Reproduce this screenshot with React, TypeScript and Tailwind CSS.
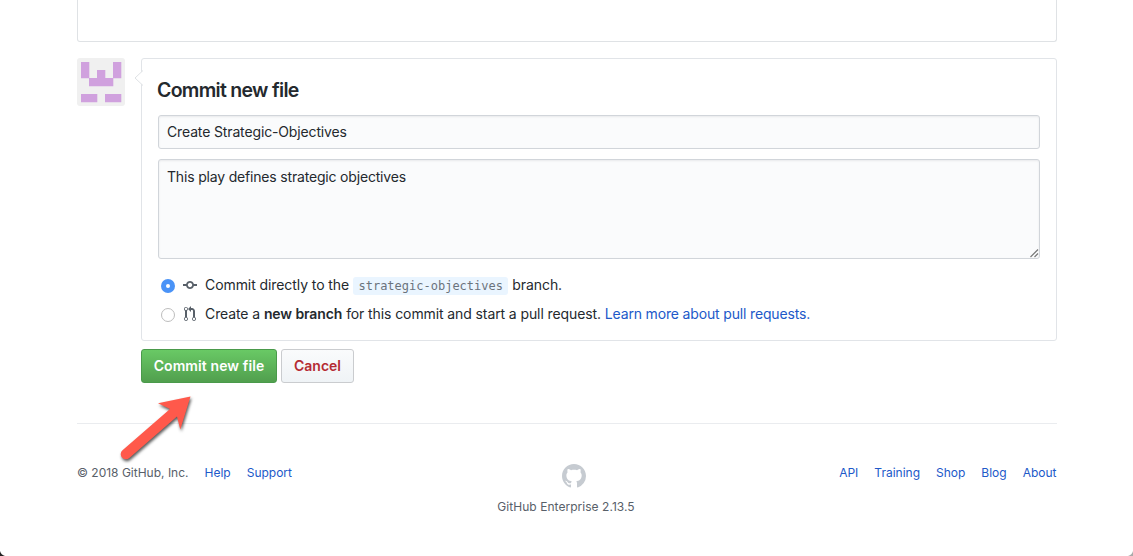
import React from "react";

const link = "text-[#2159c9]";

function Avatar() {
  return (
    <svg className="h-12 w-12 shrink-0 rounded-[3px]" viewBox="0 0 48 48">
      <rect width="48" height="48" fill="#f0f0f0" />
      <path
        fill="#d0a1de"
        d="M4 4h8.300v16.200H4zM36 4h8.300v16.200H36zM20 12h8.300v8h8v8.300H12V20h8zM4 36h16.300v8.300H4zM28 36h16.300v8.300H28z"
      />
    </svg>
  );
}

function CommitIcon() {
  return (
    <svg width="14" height="16" viewBox="0 0 14 16" fill="#586069">
      <path d="M10.86 7c-.45-1.72-2-3-3.86-3-1.86 0-3.41 1.28-3.86 3H0v2h3.14c.45 1.72 2 3 3.86 3 1.86 0 3.41-1.28 3.86-3H14V7h-3.14zM7 10.2c-1.22 0-2.2-.98-2.2-2.2 0-1.22.98-2.2 2.2-2.2 1.22 0 2.2.98 2.2 2.2 0 1.22-.98 2.2-2.2 2.2z" />
    </svg>
  );
}

function PullRequestIcon() {
  return (
    <svg width="12" height="16" viewBox="0 0 12 16" fill="#586069">
      <path d="M11 11.28V5c-.03-.78-.34-1.47-.94-2.06C9.46 2.35 8.78 2.03 8 2H7V0L4 3l3 3V4h1c.27.02.48.11.69.31.21.2.3.42.31.69v6.28A1.993 1.993 0 0 0 10 15a1.993 1.993 0 0 0 1-3.72zm-1 2.92c-.66 0-1.2-.55-1.2-1.2 0-.65.55-1.2 1.2-1.2.65 0 1.2.55 1.2 1.2 0 .65-.55 1.2-1.2 1.2zM4 3c0-1.11-.89-2-2-2a1.993 1.993 0 0 0-1 3.72v6.56A1.993 1.993 0 0 0 2 15a1.993 1.993 0 0 0 1-3.72V4.72c.59-.34 1-.98 1-1.72zm-.8 10c0 .66-.55 1.2-1.2 1.2-.65 0-1.2-.55-1.2-1.2 0-.65.55-1.2 1.2-1.2.65 0 1.2.55 1.2 1.2zM2 4.2C1.34 4.2.8 3.65.8 3c0-.65.55-1.2 1.2-1.2.65 0 1.2.55 1.2 1.2 0 .65-.55 1.2-1.2 1.2z" />
    </svg>
  );
}

function GitHubMark() {
  return (
    <svg width="24" height="24" viewBox="0 0 16 16" fill="#c6cbd1">
      <path d="M8 0C3.58 0 0 3.58 0 8c0 3.54 2.29 6.53 5.47 7.59.4.07.55-.17.55-.38 0-.19-.01-.82-.01-1.49-2.01.37-2.53-.49-2.69-.94-.09-.23-.48-.94-.82-1.13-.28-.15-.68-.52-.01-.53.63-.01 1.08.58 1.23.82.72 1.21 1.87.87 2.33.66.07-.52.28-.87.51-1.07-1.78-.2-3.64-.89-3.64-3.95 0-.87.31-1.59.82-2.15-.08-.2-.36-1.02.08-2.12 0 0 .67-.21 2.2.82.64-.18 1.32-.27 2-.27.68 0 1.36.09 2 .27 1.53-1.04 2.2-.82 2.2-.82.44 1.1.16 1.92.08 2.12.51.56.82 1.27.82 2.15 0 3.07-1.87 3.75-3.65 3.95.29.25.54.73.54 1.48 0 1.07-.01 1.93-.01 2.2 0 .21.15.46.55.38A8.013 8.013 0 0 0 16 8c0-4.42-3.58-8-8-8z" />
    </svg>
  );
}

function Arrow() {
  return (
    <svg
      className="absolute left-[36px] top-[333px] z-10 overflow-visible drop-shadow-[1px_2px_1.5px_rgba(0,0,0,0.65)]"
      width="80"
      height="72"
      viewBox="0 0 80 72"
    >
      <path fill="#ff594b" d="M77.5 5.5L45 12.2l12 5.800-47.500 41.200a5 5 0 0 0 6.800 7.800L64 25.500l3.300 13z" />
    </svg>
  );
}

export default function App() {
  return (
    <div className="relative h-[556px] w-[1133px] overflow-hidden bg-white font-['Inter','Liberation_Sans',sans-serif] text-[14px] leading-[21px] text-[#24292e]">
      <main className="ml-[77px] w-[979.5px]">
        <div className="h-[42px] rounded-b-[3px] border border-t-0 border-[#dfe2e5]" />

        <div className="relative mt-4 flex gap-4">
          <Avatar />
          <section className="relative h-[283px] flex-1 rounded-[3px] border border-[#e1e4e8] px-4 pt-[19px]">
            <svg className="absolute -left-[8px] top-[11px]" width="9" height="16" viewBox="0 0 9 16">
              <path d="M9 0.500L1 8l8 7.500" fill="#fff" stroke="#dfe2e5" />
            </svg>
            <h3 className="-ml-px h-[25px] text-[19.5px] font-semibold leading-[25px] tracking-[-0.7px]">Commit new file</h3>
            <div className="mt-3 flex h-[34px] items-center rounded-[3px] border border-[#d1d5da] bg-[#fafbfc] px-2 pb-[2px] shadow-[inset_0_1px_2px_rgba(27,31,35,0.075)]">
              <span className="tracking-[-0.14px]">Create Strategic-Objectives</span>
            </div>
            <div className="relative mt-[10px] h-[100px] rounded-[3px] border border-[#d1d5da] bg-[#fafbfc] px-2 pt-[6px] shadow-[inset_0_1px_2px_rgba(27,31,35,0.075)]">
              <span className="tracking-[-0.18px]">This play defines strategic objectives</span>
              <svg className="absolute bottom-0 right-0" width="10" height="10" viewBox="0 0 10 10" stroke="#777" strokeWidth="1.2">
                <path d="M1.500 9L9 1.500M5.500 9L9 5.500" />
              </svg>
            </div>

            <div className="mt-[15px] flex h-[21px] items-center whitespace-pre pl-[3px]">
              <span className="mt-[2px] flex h-[14px] w-[14px] items-center justify-center rounded-full bg-[#4a93f7]">
                <span className="h-1 w-1 rounded-full bg-white" />
              </span>
              <span className="ml-2 flex w-[22px]"><CommitIcon /></span>
              <span className="tracking-[-0.08px]">Commit directly to the </span>
              <code className="mt-[2px] rounded-[3px] bg-[#eaf5ff] px-[5.5px] font-['DejaVu_Sans_Mono',monospace] text-[12px] leading-[18px] text-[#6a737d]">strategic-objectives</code>
              <span className="tracking-[-0.08px]"> branch.</span>
            </div>
            <div className="mt-2 flex h-[21px] items-center whitespace-pre pl-[3px]">
              <span className="mt-[2px] h-[14px] w-[14px] rounded-full border border-[#bdbdbd] bg-white" />
              <span className="ml-[9px] flex w-[21px]"><PullRequestIcon /></span>
              <span className="tracking-[-0.1px]">Create a <b className="font-semibold">new branch</b> for this commit and start a pull request. <a className="tracking-[-0.16px] text-[#2159c9]">Learn more about pull requests.</a></span>
            </div>
          </section>
          <Arrow />
        </div>

        <div className="ml-16 mt-2 flex gap-1">
          <button className="h-[34px] w-[136px] rounded-[3px] border border-[#4a9a4b] bg-linear-to-b from-[#69c965] to-[#519f4e] pb-[2px] text-[14px] font-semibold tracking-[0.1px] text-white">Commit new file</button>
          <button className="h-[34px] w-[73px] rounded-[3px] border border-[#cacccf] bg-linear-to-b from-[#fafbfc] to-[#eff3f6] pb-[2px] text-[14px] font-semibold text-[#b52b33]">Cancel</button>
        </div>

        <footer className="relative mt-10 flex justify-between border-t border-[#eaecef] pt-10 text-[12px] leading-[18px] text-[#586069]">
          <div className="flex gap-4">
            <span>© 2018 GitHub, Inc.</span>
            <a className={link}>Help</a>
            <a className={link}>Support</a>
          </div>
          <div className="absolute left-[420px] top-10 flex w-[138px] flex-col items-center">
            <span className="ml-[16px]"><GitHubMark /></span>
            <span className="mt-[10px] whitespace-nowrap tracking-[0.04px]">GitHub Enterprise 2.13.5</span>
          </div>
          <div className="flex gap-4">
            <a className={link}>API</a>
            <a className={link}>Training</a>
            <a className={link}>Shop</a>
            <a className={link}>Blog</a>
            <a className={link}>About</a>
          </div>
        </footer>
      </main>
      <svg className="absolute bottom-0 left-0" width="5" height="5" viewBox="0 0 5 5"><path fill="#222" d="M0 0Q1 4 5 5H0z" /></svg>
      <svg className="absolute bottom-0 right-0" width="5" height="5" viewBox="0 0 5 5"><path fill="#aaa" d="M5 0Q4 4 0 5h5z" /></svg>
    </div>
  );
}
